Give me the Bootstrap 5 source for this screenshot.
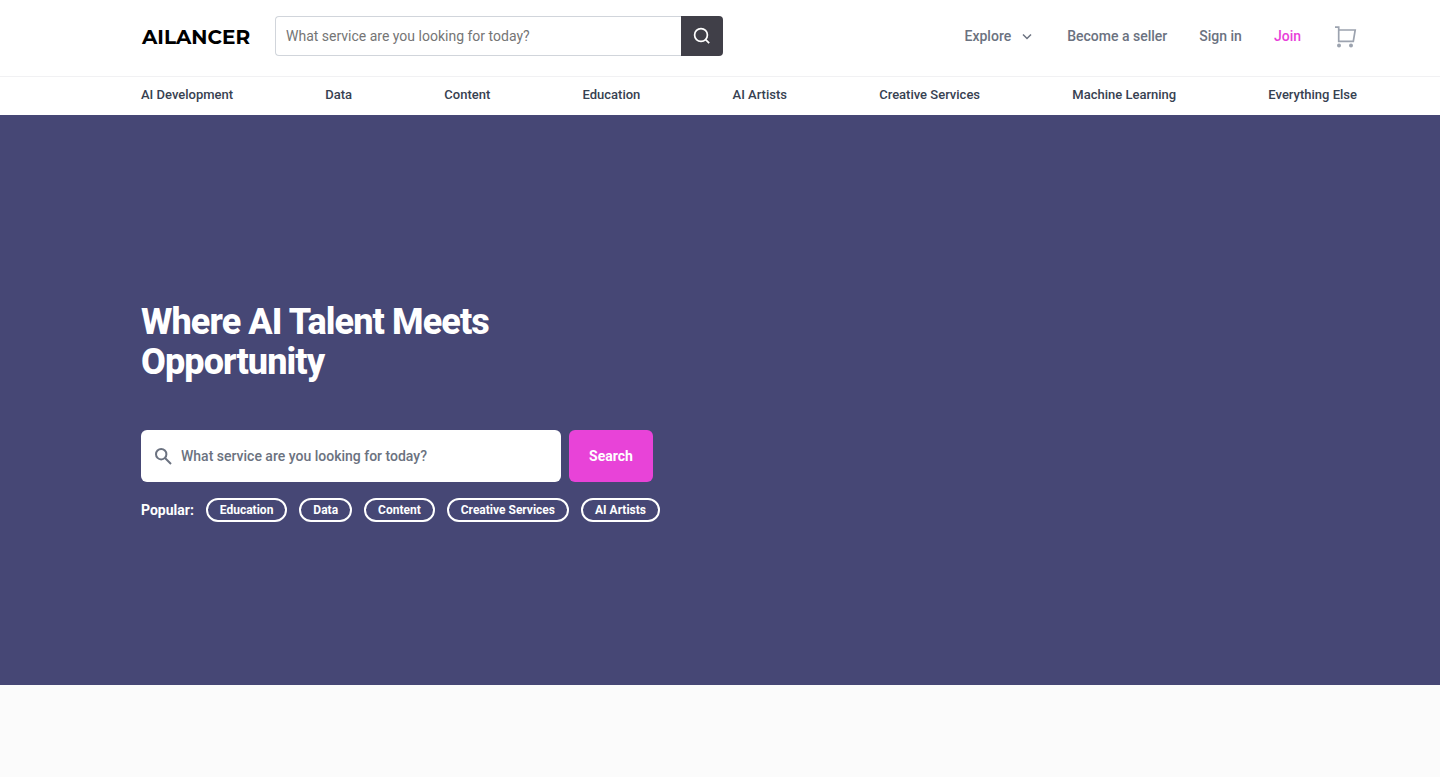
<!DOCTYPE html>
<html lang="en">
<head>
<meta charset="utf-8">
<meta name="viewport" content="width=device-width, initial-scale=1">
<title>AILANCER</title>
<link rel="stylesheet" href="https://cdn.jsdelivr.net/npm/bootstrap@5.3.0/dist/css/bootstrap.min.css">
<style>
  body { font-family: Roboto, "Liberation Sans", sans-serif; font-size: 14px; line-height: 20px; background: #fbfbfb; }
  a { text-decoration: none; }
  .page-gutter { padding-left: 141px; padding-right: 83px; }
  .topbar { height: 76px; padding-bottom: 4px; }
  .brand-name { font-family: Montserrat, Inter, sans-serif; font-weight: 700; font-size: 20px; line-height: 24px; color: #000; width: 134px; padding-left: 1px; padding-top: 2px; }
  .top-search { width: 448px; height: 40px; }
  .top-search .form-control { border: 1px solid #d1d5db; border-right: 0; border-radius: 4px 0 0 4px; padding: 0 10px; font-size: 14px; }
  .top-search .btn { flex: 0 0 42px; background: #403f48; border-radius: 0 4px 4px 0; }
  .form-control::placeholder { color: #6b7280; opacity: 1; }
  .top-search .form-control::placeholder { color: #757575; }
  .account { gap: 32px; font-weight: 500; padding-bottom: 1px; }
  .account a, .account button { color: #6b7280; }
  .account .join-link { color: #e83fd9; }
  .account .explore { gap: 8px; font-size: 14px; font-weight: 500; line-height: 20px; }
  .categories { border-top: 1px solid #f1f1f3; padding-top: 8px; padding-bottom: 10px; font-size: 13px; font-weight: 500; }
  .categories a { color: #374151; }
  .hero { background: #464775; min-height: 570px; padding-top: 24px; }
  .hero h1 { font-weight: 800; font-size: 36px; line-height: 40px; letter-spacing: -0.025em; margin-bottom: 48px; max-width: 400px; }
  .hero-field { width: 420px; height: 52px; border-radius: 6px; padding: 0 14px; gap: 9px; color: #6b7280; }
  .hero-field .form-control { font-size: 14px; font-weight: 500; }
  .btn-search { width: 84px; height: 52px; border-radius: 6px; background: #e843d8; font-size: 14px; font-weight: 700; }
  .btn-search:hover { background: #d32fc4; }
  .popular { gap: 12px; font-weight: 700; margin-top: 16px; }
  .pill { border: 2px solid #fff; border-radius: 12px; height: 24px; padding: 0 12px; font-size: 12px; line-height: 20px; color: #fff; }
</style>
</head>
<body>
<header class="bg-white">
  <div class="page-gutter topbar d-flex align-items-center">
    <a class="brand-name" href="#">AILANCER</a>
    <form class="top-search d-flex" role="search">
      <input class="form-control shadow-none" type="search" aria-label="Search services" placeholder="What service are you looking for today?">
      <button class="btn border-0 p-0 d-flex align-items-center justify-content-center" type="button" aria-label="Search">
        <svg width="18" height="18" viewBox="0 0 18 18" fill="none" stroke="#fff" stroke-width="1.7"><circle cx="8" cy="8" r="6.4"/><path d="M12.6 12.6 16.2 16.2"/></svg>
      </button>
    </form>
    <nav class="account d-flex align-items-center ms-auto" aria-label="Account">
      <button class="explore btn border-0 p-0 d-flex align-items-center" type="button">Explore
        <svg width="16" height="16" viewBox="0 0 16 16" fill="none" stroke="currentColor" stroke-width="1.5"><path d="m4 6.5 4 4 4-4"/></svg>
      </button>
      <a href="#">Become a seller</a>
      <a href="#">Sign in</a>
      <a class="join-link" href="#">Join</a>
      <a class="d-flex" href="#" aria-label="Cart">
        <svg width="24" height="24" viewBox="0 0 24 24" fill="none" stroke="#9ca3af" stroke-width="1.7"><path d="M2 3.2h3.7v14.2h14.6L22.2 6H5.7"/><circle cx="6" cy="21.6" r="2" fill="#9ca3af" stroke="none"/><circle cx="18" cy="21.6" r="2" fill="#9ca3af" stroke="none"/></svg>
      </a>
    </nav>
  </div>
  <nav class="categories page-gutter d-flex justify-content-between" aria-label="Categories">
    <a href="#">AI Development</a>
    <a href="#">Data</a>
    <a href="#">Content</a>
    <a href="#">Education</a>
    <a href="#">AI Artists</a>
    <a href="#">Creative Services</a>
    <a href="#">Machine Learning</a>
    <a href="#">Everything Else</a>
  </nav>
</header>
<main>
  <section class="hero page-gutter text-white d-flex flex-column justify-content-center">
    <h1>Where AI Talent Meets Opportunity</h1>
    <form class="d-flex gap-2">
      <label class="hero-field bg-white d-flex align-items-center">
        <svg class="flex-shrink-0" width="17" height="17" viewBox="0 0 17 17" fill="none" stroke="currentColor" stroke-width="2"><circle cx="6.2" cy="6.2" r="5.2"/><path d="m10 10 6 6"/></svg>
        <input class="form-control border-0 p-0 shadow-none" type="search" aria-label="Service" placeholder="What service are you looking for today?">
      </label>
      <button class="btn-search btn border-0 p-0 text-white" type="button">Search</button>
    </form>
    <div class="popular d-flex align-items-center">
      <span>Popular:</span>
      <a class="pill" href="#">Education</a>
      <a class="pill" href="#">Data</a>
      <a class="pill" href="#">Content</a>
      <a class="pill" href="#">Creative Services</a>
      <a class="pill" href="#">AI Artists</a>
    </div>
  </section>
</main>
<script src="https://cdn.jsdelivr.net/npm/bootstrap@5.3.0/dist/js/bootstrap.bundle.min.js"></script>
</body>
</html>
